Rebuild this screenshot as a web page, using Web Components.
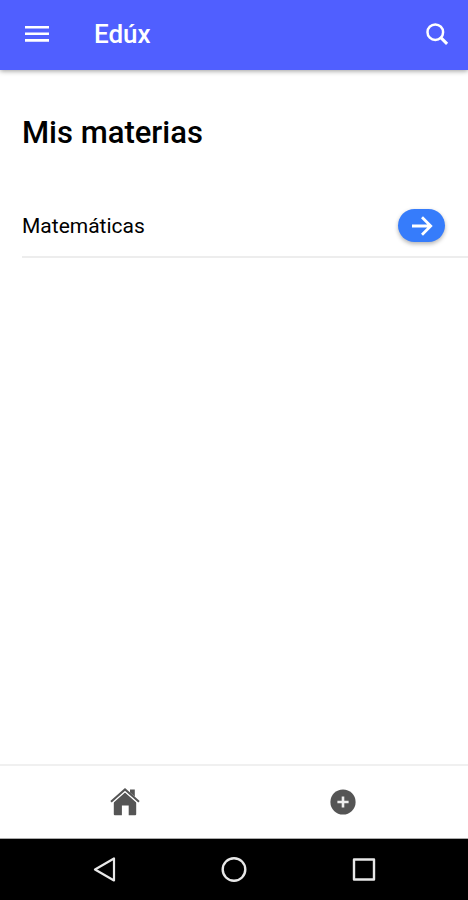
<!DOCTYPE html>
<html lang="es">
<head>
<meta charset="utf-8">
<meta name="viewport" content="width=device-width, initial-scale=1">
<title>Edúx</title>
<style>
html, body {height: 100%;}
body {margin: 0; font-family: Roboto, sans-serif; color: #000; background: #fff;}
</style>
</head>
<body>
<edux-app>
    <edux-header slot="header">Edúx</edux-header>
    <edux-subjects heading="Mis materias">
        <edux-subject>Matemáticas</edux-subject>
    </edux-subjects>
    <edux-tabs slot="footer"></edux-tabs>
    <edux-system-nav slot="footer"></edux-system-nav>
</edux-app>

<script>
class EduxElement extends HTMLElement {
    constructor() {
        super();
        this._root = this.attachShadow({mode: 'open'});
    }

    connectedCallback() {
        this._root.innerHTML = `<style>
* {box-sizing: border-box;}
button {display: flex; align-items: center; justify-content: center; margin: 0; padding: 0; border: 0; background: none; color: inherit; font: inherit; cursor: pointer;}
svg {display: block; fill: none; stroke: currentColor;}
</style>` + this.render();
    }
}

window.customElements.define('edux-app', class extends EduxElement {
    render() {
        return `<style>
:host {display: flex; flex-direction: column; min-height: 100%;}
main {flex: 1 0 auto;}
</style>
<slot name="header"></slot>
<main><slot></slot></main>
<slot name="footer"></slot>`;
    }
});

window.customElements.define('edux-header', class extends EduxElement {
    render() {
        return `<style>
:host {display: block; color: #fff; background: #505fff; box-shadow: 0 1px 5px rgba(0, 0, 0, 0.4);}
header {display: flex; align-items: center; height: 70px; padding: 0 9px 2px 15px;}
h1 {flex: 1; margin: 0; padding-left: 35px; font-size: 26px; line-height: 32px; font-weight: 500;}
button {width: 44px; height: 44px;}
</style>
<header>
    <button type="button" aria-label="Menú">
        <svg width="24" height="24" viewBox="0 0 24 24" stroke-width="2.6"><path d="M0 5.2h24M0 11.8h24M0 18.400h24"/></svg>
    </button>
    <h1><slot></slot></h1>
    <button type="button" aria-label="Buscar">
        <svg width="24" height="24" viewBox="0 0 24 24" stroke-width="2.5"><circle cx="10.3" cy="10.2" r="7.8"/><path d="M15.8 15.6l6.3 6.3" stroke-width="3"/></svg>
    </button>
</header>`;
    }
});

window.customElements.define('edux-subjects', class extends EduxElement {
    render() {
        return `<style>
:host {display: block; padding: 44px 0 0 22px;}
h2 {margin: 0 0 44px; font-size: 31px; line-height: 37px; font-weight: 500;}
</style>
<h2>${this.getAttribute('heading')}</h2>
<div role="list"><slot></slot></div>`;
    }
});

window.customElements.define('edux-subject', class extends EduxElement {
    connectedCallback() {
        this.setAttribute('role', 'listitem');
        super.connectedCallback();
    }

    render() {
        return `<style>
:host {display: flex; align-items: center; justify-content: space-between; height: 61px; padding-right: 23px; border-bottom: 2px solid #ededed; font-size: 21px; line-height: 28px;}
button {width: 47px; height: 33px; border-radius: 17px; color: #fff; background: #367cfb; box-shadow: 0 2px 4px rgba(0, 0, 0, 0.3);}
</style>
<span><slot></slot></span>
<button type="button" aria-label="Abrir materia">
    <svg width="24" height="24" viewBox="0 0 24 24" stroke-width="2.8"><path d="M2 12h18.500M12 3.3l8.7 8.7-8.7 8.7"/></svg>
</button>`;
    }
});

window.customElements.define('edux-tabs', class extends EduxElement {
    render() {
        return `<style>
:host {display: block; border-top: 2px solid #f0f0f0; border-bottom: 1px solid #aaa; color: #555;}
nav {display: flex; height: 72px; padding: 0 16px;}
button {flex: 1; height: 100%;}
</style>
<nav>
    <button type="button" aria-label="Inicio">
        <svg width="30" height="30" viewBox="0 0 30 30">
            <g fill="currentColor" stroke="none">
                <path d="M20 2.5h4.800v9L20 7.5z"/>
                <path d="M3.800 14.800L15 5l11.200 9.800V27.200q0 1-1 1H18.700V18.500h-6.800v9.700H4.800q-1 0-1-1z"/>
            </g>
            <path d="M1.200 15.400L15 3.200l13.800 12.200" stroke="#fff" stroke-width="3.400"/>
            <path d="M1 14.800L15 2.400l14 12.400" stroke-width="2"/>
        </svg>
    </button>
    <button type="button" aria-label="Agregar">
        <svg width="26" height="26" viewBox="0 0 26 26"><circle cx="13" cy="13" r="12.600" fill="currentColor" stroke="none"/><path d="M13 7.400v11.200M7.400 13h11.200" stroke="#eee" stroke-width="2.600"/></svg>
    </button>
</nav>`;
    }
});

window.customElements.define('edux-system-nav', class extends EduxElement {
    render() {
        return `<style>
:host {display: block; color: #e8e8e8; background: #000;}
nav {display: flex; height: 61px; padding: 0 39px;}
button {flex: 1; height: 100%;}
</style>
<nav>
    <button type="button" aria-label="Atrás">
        <svg width="26" height="26" viewBox="0 0 26 26" stroke-width="2.200" stroke-linejoin="round"><path d="M23 1.500v22L4 12.500z"/></svg>
    </button>
    <button type="button" aria-label="Pantalla de inicio">
        <svg width="26" height="26" viewBox="0 0 26 26" stroke-width="2.400"><circle cx="13" cy="12.500" r="11.300"/></svg>
    </button>
    <button type="button" aria-label="Recientes">
        <svg width="26" height="26" viewBox="0 0 26 26" stroke-width="2.400" stroke-linejoin="round"><rect x="3" y="2.500" width="20" height="20"/></svg>
    </button>
</nav>`;
    }
});
</script>
</body>
</html>
